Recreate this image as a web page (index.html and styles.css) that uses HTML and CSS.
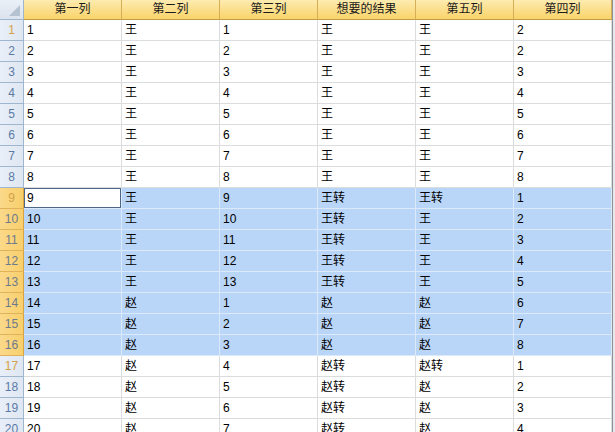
FILE: index.html
```html
<!DOCTYPE html>
<html lang="zh">
<head>
    <meta charset="UTF-8">
    <title>Sheet1</title>
    <link rel="stylesheet" href="styles.css">
</head>
<body>
<div class="hoja">
    <div class="sheet">
        <div class="corner"><span class="tri"></span></div>
        <div class="col">第一列</div>
        <div class="col">第二列</div>
        <div class="col">第三列</div>
        <div class="col">想要的结果</div>
        <div class="col">第五列</div>
        <div class="col">第四列</div>

        <div class="fila am">1</div><div class="c">1</div><div class="c">王</div><div class="c">1</div><div class="c">王</div><div class="c">王</div><div class="c">2</div>
        <div class="fila">2</div><div class="c">2</div><div class="c">王</div><div class="c">2</div><div class="c">王</div><div class="c">王</div><div class="c">2</div>
        <div class="fila">3</div><div class="c">3</div><div class="c">王</div><div class="c">3</div><div class="c">王</div><div class="c">王</div><div class="c">3</div>
        <div class="fila">4</div><div class="c">4</div><div class="c">王</div><div class="c">4</div><div class="c">王</div><div class="c">王</div><div class="c">4</div>
        <div class="fila">5</div><div class="c">5</div><div class="c">王</div><div class="c">5</div><div class="c">王</div><div class="c">王</div><div class="c">5</div>
        <div class="fila">6</div><div class="c">6</div><div class="c">王</div><div class="c">6</div><div class="c">王</div><div class="c">王</div><div class="c">6</div>
        <div class="fila">7</div><div class="c">7</div><div class="c">王</div><div class="c">7</div><div class="c">王</div><div class="c">王</div><div class="c">7</div>
        <div class="fila">8</div><div class="c">8</div><div class="c">王</div><div class="c">8</div><div class="c">王</div><div class="c">王</div><div class="c">8</div>

        <div class="fila sel am">9</div><div class="c activa">9</div><div class="c s">王</div><div class="c s">9</div><div class="c s">王转</div><div class="c s">王转</div><div class="c s">1</div>
        <div class="fila sel">10</div><div class="c s">10</div><div class="c s">王</div><div class="c s">10</div><div class="c s">王转</div><div class="c s">王</div><div class="c s">2</div>
        <div class="fila sel">11</div><div class="c s">11</div><div class="c s">王</div><div class="c s">11</div><div class="c s">王转</div><div class="c s">王</div><div class="c s">3</div>
        <div class="fila sel">12</div><div class="c s">12</div><div class="c s">王</div><div class="c s">12</div><div class="c s">王转</div><div class="c s">王</div><div class="c s">4</div>
        <div class="fila sel">13</div><div class="c s">13</div><div class="c s">王</div><div class="c s">13</div><div class="c s">王转</div><div class="c s">王</div><div class="c s">5</div>
        <div class="fila sel">14</div><div class="c s">14</div><div class="c s">赵</div><div class="c s">1</div><div class="c s">赵</div><div class="c s">赵</div><div class="c s">6</div>
        <div class="fila sel">15</div><div class="c s">15</div><div class="c s">赵</div><div class="c s">2</div><div class="c s">赵</div><div class="c s">赵</div><div class="c s">7</div>
        <div class="fila sel">16</div><div class="c s">16</div><div class="c s">赵</div><div class="c s">3</div><div class="c s">赵</div><div class="c s">赵</div><div class="c s">8</div>

        <div class="fila am">17</div><div class="c">17</div><div class="c">赵</div><div class="c">4</div><div class="c">赵转</div><div class="c">赵转</div><div class="c">1</div>
        <div class="fila">18</div><div class="c">18</div><div class="c">赵</div><div class="c">5</div><div class="c">赵转</div><div class="c">赵</div><div class="c">2</div>
        <div class="fila">19</div><div class="c">19</div><div class="c">赵</div><div class="c">6</div><div class="c">赵转</div><div class="c">赵</div><div class="c">3</div>
        <div class="fila">20</div><div class="c">20</div><div class="c">赵</div><div class="c">7</div><div class="c">赵转</div><div class="c">赵</div><div class="c">4</div>
    </div>
</div>
</body>
</html>
```

FILE: styles.css
```css
body{
    margin: 0;
    background-color: #e6e8eb;
    font-family: "Liberation Sans", "Noto Sans CJK SC", sans-serif;
    font-size: 12px;
    color: #000;
    overflow: hidden;
}
.hoja{
    width: 612px;
    height: 432px;
    overflow: hidden;
    background-color: white;
    border-right: 1px solid #8d9094;
}
.sheet{
    display: grid;
    grid-template-columns: 24px repeat(6, 98px);
    grid-template-rows: 20px;
    grid-auto-rows: 21px;
}
.sheet > div{
    box-sizing: border-box;
    white-space: nowrap;
    overflow: hidden;
}
.corner{
    position: relative;
    background: linear-gradient(#eaf0f7, #dbe3ee);
    border-right: 1px solid #9eb6ce;
    border-bottom: 1px solid #9eb6ce;
}
.tri{
    position: absolute;
    right: 3px;
    bottom: 3px;
    width: 0;
    height: 0;
    border-left: 11px solid transparent;
    border-bottom: 11px solid #b5c2d2;
}
.col{
    background: linear-gradient(#fdebb0, #fbdf8c 50%, #f9d46a);
    border-right: 1px solid #d6ae55;
    border-bottom: 1px solid #c19b45;
    text-align: center;
    line-height: 19px;
    color: #1a1a1a;
}
.fila{
    background: linear-gradient(90deg, #e9eff8, #dfe7f2);
    border-right: 1px solid #9eb6ce;
    border-bottom: 1px solid #9eb6ce;
    text-align: center;
    line-height: 20px;
    color: #5a7aa6;
}
.fila.sel{
    background: linear-gradient(90deg, #fbd98a, #f8cf6c);
    border-right: 1px solid #d9a33d;
    border-bottom: 1px solid #e0b259;
    color: #6c7a8e;
}
.fila.am{
    color: #d4a24a;
}
.c{
    border-right: 1px solid #dadcdd;
    border-bottom: 1px solid #dadcdd;
    padding-left: 3px;
    line-height: 21px;
}
.c.s{
    background-color: #b9d6f8;
    border-right-color: #dce9f9;
    border-bottom-color: #dce9f9;
}
.c.activa{
    background-color: white;
    border-right-color: #dce9f9;
    border-bottom-color: #dce9f9;
    box-shadow: inset 0 0 0 1px #4f6787;
}
```
